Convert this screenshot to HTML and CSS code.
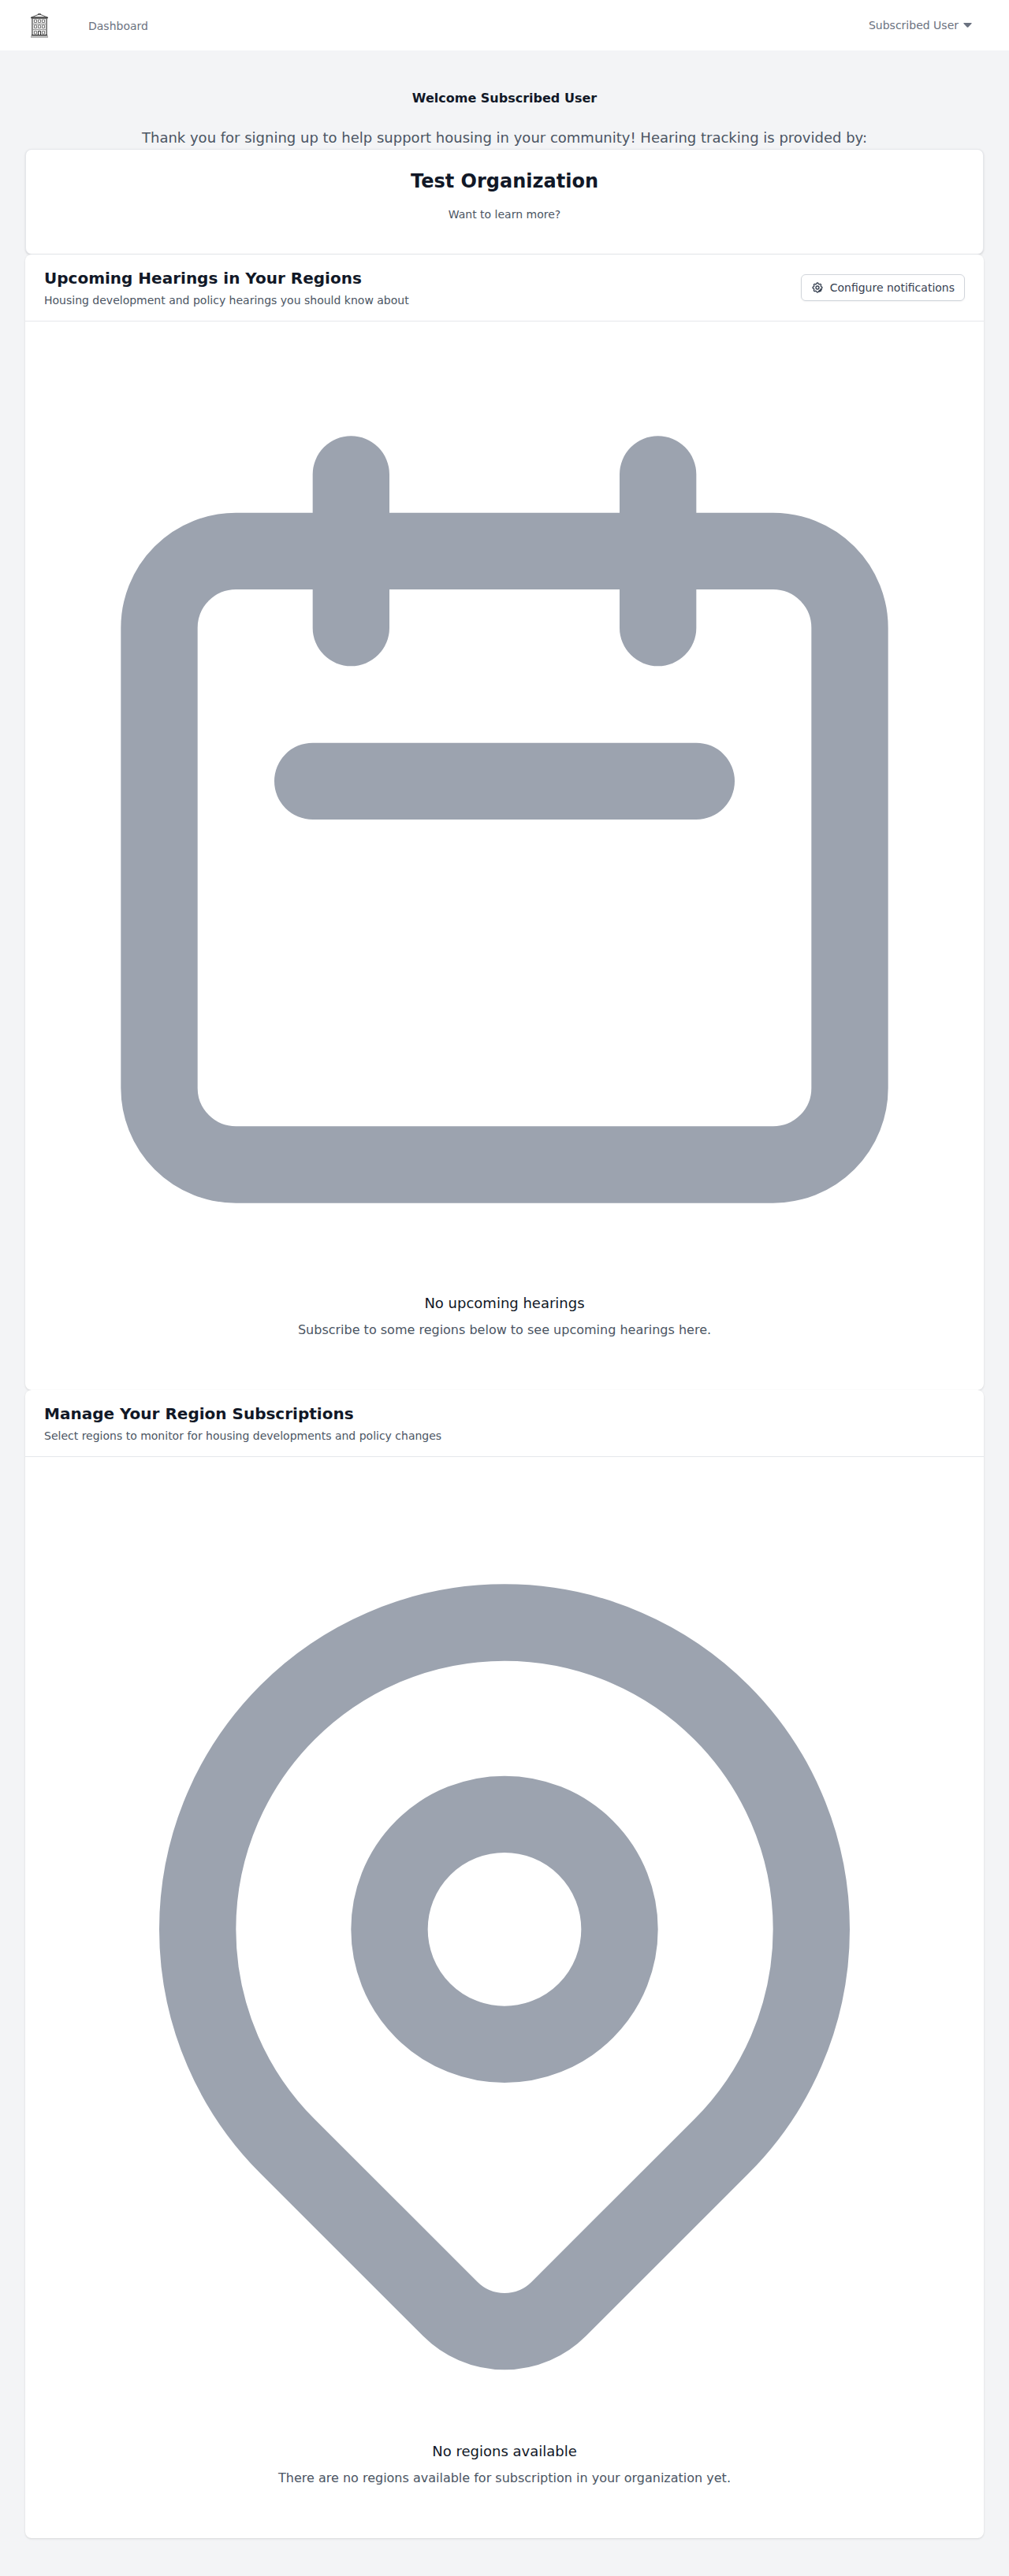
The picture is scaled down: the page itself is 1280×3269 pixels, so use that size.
FILE: index.html
```html
<!DOCTYPE html>
<html lang="en">
<head>
<meta charset="utf-8">
<title>Dashboard</title>
<link rel="stylesheet" href="styles.css">
</head>
<body>
<nav class="nav">
  <svg class="logo" viewBox="0 0 22 31" aria-hidden="true">
    <path d="M1 5 11 .8 21 5z" fill="#f3f3f3" stroke="#555" stroke-width="1"/>
    <path d="M9 1h4" stroke="#222"/>
    <path d="M1.500 6.500h19V28h-19z" fill="#eee" stroke="#888"/>
    <path d="M2 6v22M20 6v22" stroke="#777" stroke-width="1.400"/>
    <path d="M0 5.500h22" stroke="#444" stroke-width="1.600"/>
    <path d="M2 13.500h18M2 20.500h18" stroke="#999"/>
    <path d="M4.500 8h3v3.500h-3zM9.500 8h3v3.500h-3zM14.500 8h3v3.500h-3zM4.500 15h3v3.500h-3zM9.500 15h3v3.500h-3zM14.500 15h3v3.500h-3zM4.500 22.500h3V26h-3zM14.500 22.500h3V26h-3z" fill="#fff" stroke="#777"/>
    <path d="M9.500 27.500v-5h3v5" fill="#fff" stroke="#333"/>
    <path d="M1 27.500h20" stroke="#222"/>
    <path d="M0 29.500h22" stroke="#b5b5b5" stroke-width="3"/>
  </svg>
  <a class="nav-link">Dashboard</a>
  <button class="user-menu">Subscribed User
    <svg class="caret" viewBox="0 0 11 6" aria-hidden="true"><path d="M.8 0h9.400q.8.300.3 1L6.300 5.500q-.8.700-1.600 0L.5 1Q0 .3.800 0z"/></svg>
  </button>
</nav>
<main class="page">
  <h1 class="welcome">Welcome Subscribed User</h1>
  <p class="thanks">Thank you for signing up to help support housing in your community! Hearing tracking is provided by:</p>
  <section class="org">
    <h2 class="org-name">Test Organization</h2>
    <p class="org-more">Want to learn more?</p>
  </section>
  <section class="card">
    <header class="card-head">
      <div>
        <h2 class="card-title">Upcoming Hearings in Your Regions</h2>
        <p class="card-sub">Housing development and policy hearings you should know about</p>
      </div>
      <button class="button">
        <svg class="gear" viewBox="0 0 24 24" aria-hidden="true"><path d="M10.325 4.317c.426-1.756 2.924-1.756 3.350 0a1.724 1.724 0 002.573 1.066c1.543-.94 3.310.826 2.370 2.370a1.724 1.724 0 001.065 2.572c1.756.426 1.756 2.924 0 3.350a1.724 1.724 0 00-1.066 2.573c.94 1.543-.826 3.310-2.370 2.370a1.724 1.724 0 00-2.572 1.065c-.426 1.756-2.924 1.756-3.350 0a1.724 1.724 0 00-2.573-1.066c-1.543.94-3.310-.826-2.370-2.370a1.724 1.724 0 00-1.065-2.572c-1.756-.426-1.756-2.924 0-3.350a1.724 1.724 0 001.066-2.573c-.94-1.543.826-3.310 2.370-2.370.996.608 2.296.07 2.572-1.065z"/><path d="M15 12a3 3 0 11-6 0 3 3 0 016 0zM15 20l5-4.500M15.500 18l3-2.500"/></svg>
        Configure notifications
      </button>
    </header>
    <div class="empty">
      <svg class="empty-icon" viewBox="0 0 24 24" aria-hidden="true"><path d="M8 7V3m8 4V3m-9 8h10M5 21h14a2 2 0 002-2V7a2 2 0 00-2-2H5a2 2 0 00-2 2v12a2 2 0 002 2z"/></svg>
      <h3 class="empty-title">No upcoming hearings</h3>
      <p class="empty-text">Subscribe to some regions below to see upcoming hearings here.</p>
    </div>
  </section>
  <section class="card">
    <header class="card-head">
      <div>
        <h2 class="card-title">Manage Your Region Subscriptions</h2>
        <p class="card-sub">Select regions to monitor for housing developments and policy changes</p>
      </div>
    </header>
    <div class="empty empty-regions">
      <svg class="empty-icon" viewBox="0 0 24 24" aria-hidden="true"><path d="M17.657 16.657L13.414 20.900a1.998 1.998 0 01-2.827 0l-4.244-4.243a8 8 0 1111.314 0z"/><path d="M15 11a3 3 0 11-6 0 3 3 0 016 0z"/></svg>
      <h3 class="empty-title">No regions available</h3>
      <p class="empty-text">There are no regions available for subscription in your organization yet.</p>
    </div>
  </section>
</main>
</body>
</html>
```
FILE: styles.css
```css
* { box-sizing: border-box; margin: 0; }
body {
  background: #f3f4f6;
  color: #111827;
  font: 16px/24px "DejaVu Sans", sans-serif;
}
button { font: inherit; background: none; border: 0; padding: 0; }
svg { display: block; flex: none; }

.nav {
  display: flex;
  align-items: center;
  height: 65px;
  padding: 0 47px 0 39px;
  background: #fff;
  border-bottom: 1px solid #f3f4f6;
  color: #6b7280;
  font-size: 14px;
  line-height: 20px;
}
.logo { width: 22px; height: 31px; }
.nav-link { margin-left: 51px; padding-top: 2px; }
.user-menu { display: flex; align-items: center; gap: 6px; margin-left: auto; color: #6b7280; }
.caret { width: 11px; height: 6px; fill: currentColor; }

.page { padding: 48px 32px; }
.welcome { font-size: 16px; line-height: 24px; font-weight: 700; text-align: center; }
.thanks { margin-top: 24px; font-size: 18px; line-height: 28px; color: #4b5563; text-align: center; }

.org {
  height: 134px;
  padding: 24px;
  background: #fff;
  border: 1px solid #e5e7eb;
  border-radius: 8px;
  box-shadow: 0 1px 3px rgb(0 0 0 / .1), 0 1px 2px -1px rgb(0 0 0 / .1);
  text-align: center;
}
.org-name { font-size: 24px; line-height: 32px; }
.org-more { margin-top: 16px; font-size: 14px; line-height: 20px; color: #4b5563; }

.card {
  background: #fff;
  border-radius: 8px;
  box-shadow: 0 1px 3px rgb(0 0 0 / .1), 0 1px 2px -1px rgb(0 0 0 / .1);
}
.card-head {
  display: flex;
  align-items: center;
  justify-content: space-between;
  padding: 16px 24px;
  border-bottom: 1px solid #e5e7eb;
}
.card-title { font-size: 20px; line-height: 28px; }
.card-sub { margin-top: 4px; font-size: 14px; line-height: 20px; color: #4b5563; }
.button {
  display: flex;
  align-items: center;
  gap: 8px;
  height: 34px;
  padding: 0 12px;
  border: 1px solid #d1d5db;
  border-radius: 6px;
  box-shadow: 0 1px 2px rgb(0 0 0 / .05);
  color: #374151;
  font-size: 14px;
  line-height: 20px;
}
.gear, .empty-icon { fill: none; stroke: currentColor; stroke-width: 2; stroke-linecap: round; stroke-linejoin: round; }
.gear { width: 16px; height: 16px; }

.empty { padding: 48px 24px 64px; text-align: center; }
.empty-regions { padding-top: 64px; }
.empty-icon { width: 100%; color: #9ca3af; }
.empty-title { margin-top: 16px; font-size: 18px; line-height: 28px; font-weight: 500; }
.empty-text { margin-top: 8px; color: #4b5563; }
```
